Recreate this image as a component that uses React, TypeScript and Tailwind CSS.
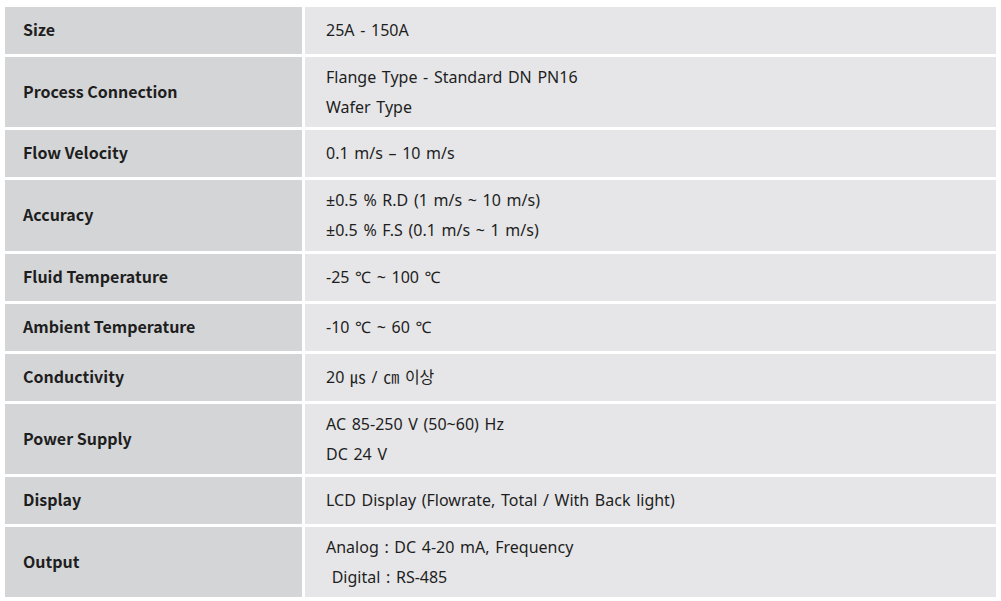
const rows: { label: string; values: string[]; h: string }[] = [
  { label: "Size", values: ["25A - 150A"], h: "h-[47px]" },
  { label: "Process Connection", values: ["Flange Type - Standard DN PN16", "Wafer Type"], h: "h-[70px]" },
  { label: "Flow Velocity", values: ["0.1 m/s – 10 m/s"], h: "h-[47px]" },
  { label: "Accuracy", values: ["±0.5 % R.D (1 m/s ~ 10 m/s)", "±0.5 % F.S (0.1 m/s ~ 1 m/s)"], h: "h-[71px]" },
  { label: "Fluid Temperature", values: ["-25 ℃ ~ 100 ℃"], h: "h-[47px]" },
  { label: "Ambient Temperature", values: ["-10 ℃ ~ 60 ℃"], h: "h-[47px]" },
  { label: "Conductivity", values: ["20 ㎲ / ㎝ 이상"], h: "h-[47px]" },
  { label: "Power Supply", values: ["AC 85-250 V (50~60) Hz", "DC 24 V"], h: "h-[70px]" },
  { label: "Display", values: ["LCD Display (Flowrate, Total / With Back light)"], h: "h-[47px]" },
  { label: "Output", values: ["Analog : DC 4-20 mA, Frequency", "\u00a0Digital : RS-485"], h: "h-[70px]" },
];

export default function App() {
  return (
    <div className="bg-white w-[1001px] h-[601px] pt-[7px] pl-[5px] text-[#1e1e1e]">
      <div className="w-[991px] flex flex-col gap-[3px]">
        {rows.map((r) => (
          <div key={r.label} className={`flex gap-[3px] ${r.h}`}>
            <div
              className="w-[297px] bg-[#d4d5d7] flex items-center pl-[18px] pb-[3px] text-[16px] font-bold"
              style={{ fontFamily: '"Noto Sans CJK KR", sans-serif' }}
            >
              {r.label}
            </div>
            <div
              className="flex-1 bg-[#e6e6e8] flex flex-col justify-center pl-[21px] pb-[1px] text-[16px] leading-[30px] [word-spacing:1.5px]"
              style={{ fontFamily: '"Noto Sans", "Noto Sans CJK KR", sans-serif' }}
            >
              {r.values.map((v) => (
                <p key={v}>{v}</p>
              ))}
            </div>
          </div>
        ))}
      </div>
    </div>
  );
}
